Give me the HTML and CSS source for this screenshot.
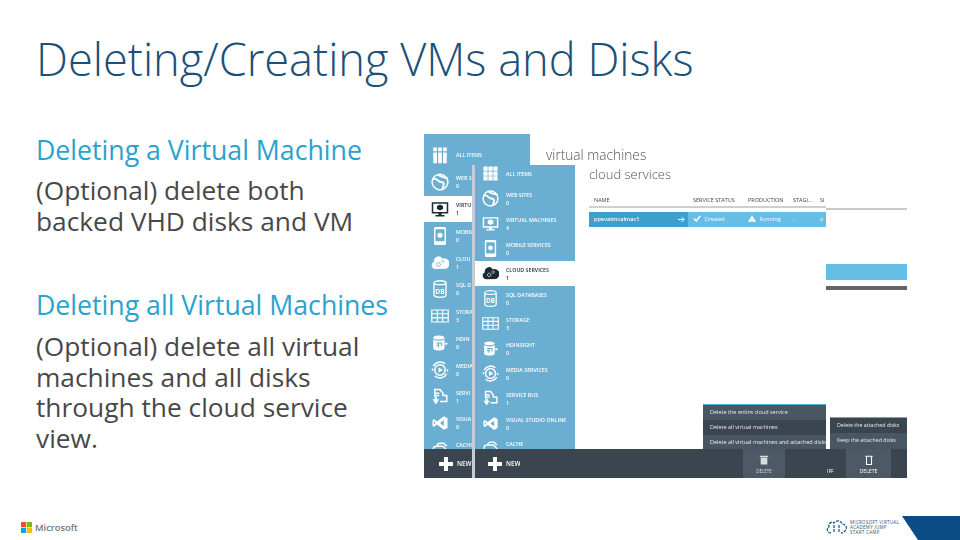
FILE: index.html

```html
<!DOCTYPE html>
<html lang="en">
<head>
    <meta charset="UTF-8" />
    <title>Deleting/Creating VMs and Disks</title>
    <link rel="stylesheet" href="styles.css">
</head>
<body>
<svg class="defs" width="0" height="0">
    <defs>
        <symbol id="i-all" viewBox="0 0 24 24"><path fill="currentColor" d="M3 2h5v5H3zM9.500 2h5v5h-5zM16 2h5v5h-5zM3 8.500h5V23H3zM9.500 8.500h5V23h-5zM16 8.500h5V23h-5z"/></symbol>
        <symbol id="i-grid" viewBox="0 0 24 24"><path fill="currentColor" d="M2 2h6v6H2zM9 2h6v6H9zM16 2h6v6h-6zM2 9h6v6H2zM9 9h6v6H9zM16 9h6v6h-6zM2 16h6v6H2zM9 16h6v6H9zM16 16h6v6h-6z"/></symbol>
        <symbol id="i-web" viewBox="0 0 24 24"><circle cx="12" cy="12" r="10.500" fill="none" stroke="currentColor" stroke-width="2"/><path fill="none" stroke="currentColor" stroke-width="2.600" d="M3 8c6-2 5 4 10 4s5 4 2 9M9 2c4 3 8 4 13 5"/></symbol>
        <symbol id="i-vm" viewBox="0 0 24 24"><path fill="currentColor" fill-rule="evenodd" d="M1 3h22v15h-9v2h4v2H6v-2h4v-2H1zM3 5v11h18V5z"/><path fill="currentColor" d="M12 6l4 2v4l-4 2-4-2V8z"/></symbol>
        <symbol id="i-mobile" viewBox="0 0 24 24"><path fill="currentColor" fill-rule="evenodd" d="M6 0h12a2 2 0 0 1 2 2v20a2 2 0 0 1-2 2H6a2 2 0 0 1-2-2V2a2 2 0 0 1 2-2zM6 3v16h12V3z"/><circle cx="12" cy="11" r="3.400" fill="currentColor"/></symbol>
        <symbol id="i-cloud" viewBox="0 0 24 24"><path fill="currentColor" d="M6 20a5 5 0 0 1-2-9.600A6 6 0 0 1 15 6a5 5 0 0 1 5 13.600z"/><circle cx="10" cy="14" r="2.400" fill="none" stroke="var(--hole)" stroke-width="1.400" stroke-dasharray="1.200 .6"/><circle cx="15.500" cy="10" r="1.800" fill="none" stroke="var(--hole)" stroke-width="1.200" stroke-dasharray="1 .5"/></symbol>
        <symbol id="i-sql" viewBox="0 0 24 24"><path fill="none" stroke="currentColor" stroke-width="1.800" d="M4 4c0-4 16-4 16 0v16c0 4-16 4-16 0zM4 4c0 3 16 3 16 0"/><text x="12" y="18" text-anchor="middle" font-size="9" font-weight="700" fill="currentColor">DB</text></symbol>
        <symbol id="i-storage" viewBox="0 0 24 24"><path fill="none" stroke="currentColor" stroke-width="1.500" d="M1 4h22v16H1zM1 9h22M1 14.500h22M8.500 4v16M15.500 4v16"/></symbol>
        <symbol id="i-hd" viewBox="0 0 24 24"><path fill="currentColor" d="M3 5c0-4 15-4 15 0v14c0 4-15 4-15 0z"/><path fill="none" stroke="var(--hole)" stroke-width="1.500" d="M3 6c2 3 13 3 15 0M7 12h8M10 12v6M14 12v4M7 15h4"/><path fill="currentColor" d="M19 11l4 2-4 2z"/></symbol>
        <symbol id="i-media" viewBox="0 0 24 24"><circle cx="12" cy="12" r="7" fill="none" stroke="currentColor" stroke-width="2"/><path fill="none" stroke="currentColor" stroke-width="2" d="M3 7a10.500 10.500 0 0 1 16-3M21 17a10.500 10.500 0 0 1-16 3M2 13v-3M22 11v3"/><path fill="currentColor" d="M10 8.500l6 3.500-6 3.500z"/></symbol>
        <symbol id="i-bus" viewBox="0 0 24 24"><path fill="none" stroke="currentColor" stroke-width="2" d="M5 12V2h7l4 5v3h5v8H12M5 7h6M5 10h6"/><path fill="currentColor" d="M2 15h3v-3h3v3h3l-4.500 7z"/></symbol>
        <symbol id="i-vso" viewBox="0 0 24 24"><path fill="currentColor" d="M17 3l5 2.500v13L17 21 8 14l-4 3-2-1V8l2-1 4 3zM17 8l-5 4 5 4zM4 10v4l2-2z"/></symbol>
        <symbol id="i-cache" viewBox="0 0 24 24"><path fill="none" stroke="currentColor" stroke-width="2" d="M3 22V10c0-2 3-3 5-3h8l5 5v10zM8 7c0-3 3-4 5-4h4l4 4"/><path fill="currentColor" d="M3 14h18v3H3z"/></symbol>
    </defs>
</svg>

<div class="slide">
    <h1 class="title">Deleting/Creating VMs and Disks</h1>

    <div class="content">
        <div class="notes">
            <h2>Deleting a Virtual Machine</h2>
            <p>(Optional) delete both backed VHD disks and VM</p>
            <h2 class="second">Deleting all Virtual Machines</h2>
            <p>(Optional) delete all virtual machines and all disks through the cloud service view.</p>
        </div>

        <div class="shot">
            <div class="portal">
                <nav class="nav nav-back">
                    <div class="nav-item"><svg><use href="#i-all"/></svg><div><b>ALL ITEMS</b></div></div>
                    <div class="nav-item"><svg><use href="#i-web"/></svg><div><b>WEB S</b><i>0</i></div></div>
                    <div class="nav-item active"><svg><use href="#i-vm"/></svg><div><b>VIRTU</b><i>1</i></div></div>
                    <div class="nav-item"><svg><use href="#i-mobile"/></svg><div><b>MOBIL</b><i>0</i></div></div>
                    <div class="nav-item"><svg><use href="#i-cloud"/></svg><div><b>CLOU</b><i>1</i></div></div>
                    <div class="nav-item"><svg><use href="#i-sql"/></svg><div><b>SQL D</b><i>0</i></div></div>
                    <div class="nav-item"><svg><use href="#i-storage"/></svg><div><b>STORA</b><i>3</i></div></div>
                    <div class="nav-item"><svg><use href="#i-hd"/></svg><div><b>HDIN</b><i>0</i></div></div>
                    <div class="nav-item"><svg><use href="#i-media"/></svg><div><b>MEDIA</b><i>0</i></div></div>
                    <div class="nav-item"><svg><use href="#i-bus"/></svg><div><b>SERVI</b><i>1</i></div></div>
                    <div class="nav-item"><svg><use href="#i-vso"/></svg><div><b>VISUA</b><i>0</i></div></div>
                    <div class="nav-item last"><svg><use href="#i-cache"/></svg><div><b>CACHI</b></div></div>
                </nav>
                <div class="page-title">virtual machines</div>

                <div class="window">
                    <nav class="nav nav-front">
                        <div class="nav-item"><svg><use href="#i-grid"/></svg><div><b>ALL ITEMS</b></div></div>
                        <div class="nav-item"><svg><use href="#i-web"/></svg><div><b>WEB SITES</b><i>0</i></div></div>
                        <div class="nav-item"><svg><use href="#i-vm"/></svg><div><b>VIRTUAL MACHINES</b><i>4</i></div></div>
                        <div class="nav-item"><svg><use href="#i-mobile"/></svg><div><b>MOBILE SERVICES</b><i>0</i></div></div>
                        <div class="nav-item active"><svg><use href="#i-cloud"/></svg><div><b>CLOUD SERVICES</b><i>1</i></div></div>
                        <div class="nav-item"><svg><use href="#i-sql"/></svg><div><b>SQL DATABASES</b><i>0</i></div></div>
                        <div class="nav-item"><svg><use href="#i-storage"/></svg><div><b>STORAGE</b><i>3</i></div></div>
                        <div class="nav-item"><svg><use href="#i-hd"/></svg><div><b>HDINSIGHT</b><i>0</i></div></div>
                        <div class="nav-item"><svg><use href="#i-media"/></svg><div><b>MEDIA SERVICES</b><i>0</i></div></div>
                        <div class="nav-item"><svg><use href="#i-bus"/></svg><div><b>SERVICE BUS</b><i>1</i></div></div>
                        <div class="nav-item"><svg><use href="#i-vso"/></svg><div><b>VISUAL STUDIO ONLINE</b><i>0</i></div></div>
                        <div class="nav-item last"><svg><use href="#i-cache"/></svg><div><b>CACHE</b></div></div>
                    </nav>
                    <div class="main">
                        <div class="main-title">cloud services</div>
                        <div class="table-head">
                            <span class="col-name">NAME</span>
                            <span class="col-status">SERVICE STATUS</span>
                            <span class="col-prod">PRODUCTION</span>
                            <span class="col-stag">STAGI...</span>
                            <span class="col-sub">SI</span>
                        </div>
                        <div class="table-row">
                            <span class="cell-name">ppevatmcalmac1
                                <svg class="arrow" viewBox="0 0 8 8"><path fill="none" stroke="#fff" stroke-width="1.100" d="M0 4h7M4 1l3 3-3 3"/></svg>
                            </span>
                            <span class="cell-rest">
                                <span class="col-status">
                                    <svg class="state" viewBox="0 0 10 8"><path fill="none" stroke="#fff" stroke-width="2" d="M1 4l3 3 5-6"/></svg>
                                    Created
                                </span>
                                <span class="col-prod">
                                    <svg class="state" viewBox="0 0 10 8"><path fill="#fff" fill-rule="evenodd" d="M5 0l5 8H0zM4.600 3v2.500h.8V3zM4.600 6v1h.8V6z"/></svg>
                                    Running
                                </span>
                                <span class="col-stag">-</span>
                                <span class="col-sub">o</span>
                            </span>
                        </div>
                    </div>
                </div>

                <div class="right-rule"></div>
                <div class="right-bar"></div>
                <div class="right-line"></div>

                <div class="menu menu-one">
                    <div>Delete the entire cloud service</div>
                    <div class="dark">Delete all virtual machines</div>
                    <div>Delete all virtual machines and attached disks</div>
                </div>
                <div class="menu menu-two">
                    <div class="dark">Delete the attached disks</div>
                    <div>Keep the attached disks</div>
                </div>

                <div class="cmdbar">
                    <div class="new new-back"><span class="plus"></span>NEW</div>
                    <div class="new new-front"><span class="plus"></span>NEW</div>
                    <div class="cmd cmd-one">
                        <svg viewBox="0 0 12 12"><path fill="currentColor" d="M1 1h10v1.500H1zM2 3h8v8.500H2z"/></svg>
                        <span>DELETE</span>
                    </div>
                    <div class="off">IFF</div>
                    <div class="cmd cmd-two">
                        <svg viewBox="0 0 12 12"><path fill="none" stroke="currentColor" stroke-width="1.300" d="M1.500 1.500h9M3 1.500v10h6v-10"/></svg>
                        <span>DELETE</span>
                    </div>
                </div>
            </div>
        </div>
    </div>

    <footer class="footer">
        <div class="ms">
            <svg width="11" height="11" viewBox="0 0 11 11">
                <rect width="5.200" height="5.200" fill="#f25022"/>
                <rect x="5.800" width="5.200" height="5.200" fill="#7fba00"/>
                <rect y="5.800" width="5.200" height="5.200" fill="#00a4ef"/>
                <rect x="5.800" y="5.800" width="5.200" height="5.200" fill="#ffb900"/>
            </svg>
            <span>Microsoft</span>
        </div>
        <div class="mva">
            <svg width="22" height="16" viewBox="0 0 22 16">
                <path fill="none" stroke="#1f5f8f" stroke-width="1.300" stroke-dasharray="3 1" d="M5 14C1 14 0 9 3 8 2 4 6 2 8 4c2-3 7-3 8 1 4 0 6 4 3 7-1 1-2 2-4 2M8 6v8M13 6v8"/>
            </svg>
            <div class="mva-text">MICROSOFT VIRTUAL<br>ACADEMY JUMP<br>START CAMP</div>
        </div>
        <div class="corner"></div>
    </footer>
</div>
</body>
</html>
```

FILE: styles.css

```css
html, body {
    margin: 0;
    padding: 0;
    background: #ffffff;
}
.defs {
    display: none;
}
.slide {
    width: 960px;
    height: 540px;
    position: relative;
    overflow: hidden;
    font-family: 'Open Sans', 'Noto Sans', sans-serif;
}
.title {
    margin: 0;
    padding: 30px 0 0 36px;
    font-size: 45.200px;
    line-height: 58px;
    font-weight: 300;
    color: #1b5079;
    white-space: nowrap;
}
.content {
    display: flex;
    padding-top: 46px;
}
.notes {
    flex: none;
    padding-left: 36px;
    box-sizing: border-box;
    width: 424px;
}
.notes h2 {
    margin: 0 0 10px;
    font-size: 26.700px;
    line-height: 31px;
    font-weight: 400;
    color: #29a3cd;
    white-space: nowrap;
}
.notes h2.second {
    margin: 53px 0 11px;
}
.notes p {
    margin: 0;
    max-width: 335px;
    font-size: 26.300px;
    line-height: 30.500px;
    color: #484848;
}

/* the screenshot on the right */
.shot {
    width: 483px;
    height: 344px;
    flex: none;
    filter: blur(0.35px);
}
.portal {
    position: relative;
    width: 483px;
    height: 344px;
    overflow: hidden;
    background: #fff;
}
.nav {
    background: #6aaed1;
    color: #fff;
    box-sizing: border-box;
    overflow: hidden;
}
.nav-item {
    --hole: #6aaed1;
    display: flex;
    align-items: center;
    box-sizing: border-box;
    white-space: nowrap;
}
.nav-item svg {
    flex: none;
}
.nav-item b,
.nav-item i {
    display: block;
    font-size: 5.300px;
    line-height: 8px;
    font-weight: 600;
    font-style: normal;
}
.nav-item.active {
    --hole: #fff;
    background: #fff;
    color: #1e2a33;
}
.nav-item.last {
    align-items: flex-start;
    padding-top: 4px;
}
.nav-back {
    position: absolute;
    left: 0;
    top: 0;
    width: 106px;
    height: 344px;
    padding-top: 8px;
}
.nav-back .nav-item {
    height: 26.800px;
    padding-left: 7px;
    gap: 7px;
}
.nav-back .nav-item svg {
    width: 18px;
    height: 18px;
}
.page-title {
    position: absolute;
    left: 122px;
    top: 12px;
    font-size: 13.700px;
    line-height: 18px;
    font-weight: 300;
    color: #555;
}
.window {
    position: absolute;
    left: 48px;
    top: 31px;
    width: 435px;
    height: 313px;
    display: flex;
    background: #fff;
    border-left: 3px solid #c5cdd3;
    box-sizing: border-box;
}
.nav-front {
    width: 100px;
    flex: none;
    height: 284px;
}
.nav-front .nav-item {
    height: 25px;
    padding-left: 7px;
    gap: 7px;
}
.nav-front .nav-item:first-child {
    margin-top: -4px;
}
.nav-front .nav-item svg {
    width: 17px;
    height: 17px;
}
.main {
    flex: 1;
    padding-left: 14px;
}
.main-title {
    font-size: 13px;
    line-height: 18px;
    font-weight: 300;
    color: #555;
}
.table-head {
    display: flex;
    width: 237px;
    margin-top: 9px;
    height: 14px;
    font-size: 5.500px;
    line-height: 16px;
    color: #444;
    border-bottom: 2px solid #cfcfcf;
    white-space: nowrap;
}
.col-name {
    width: 104px;
    padding-left: 5px;
    box-sizing: border-box;
}
.col-status {
    width: 55px;
}
.col-prod {
    width: 45px;
}
.col-stag {
    width: 27px;
}
.col-sub {
    width: 6px;
}
.table-row {
    display: flex;
    width: 237px;
    height: 15px;
    margin-top: 4px;
    font-size: 5.500px;
    line-height: 15px;
    color: #fff;
    white-space: nowrap;
}
.cell-name {
    width: 99px;
    flex: none;
    box-sizing: border-box;
    padding: 0 3px 0 5px;
    display: flex;
    justify-content: space-between;
    align-items: center;
    background: #3d9fcc;
    font-weight: 600;
}
.arrow {
    width: 7px;
    height: 7px;
}
.cell-rest {
    flex: 1;
    display: flex;
    padding-left: 5px;
    background: #66bde6;
}
.state {
    width: 8px;
    height: 7px;
    margin-right: 2px;
    vertical-align: -1px;
}
.right-rule,
.right-bar,
.right-line {
    position: absolute;
    left: 402px;
    width: 81px;
}
.right-rule {
    top: 74px;
    height: 2px;
    background: #c9c9c9;
}
.right-bar {
    top: 130px;
    height: 16px;
    background: #66bde6;
}
.right-line {
    top: 152px;
    height: 4px;
    background: #666;
}

/* delete menus sit over the command bar */
.menu {
    position: absolute;
    box-sizing: border-box;
    border-top: 1px solid #4fb3d4;
    background: #4a5661;
    color: #e8ecef;
    font-size: 5.500px;
    white-space: nowrap;
    overflow: hidden;
}
.menu div {
    height: 15px;
    line-height: 15px;
    padding-left: 7px;
}
.menu .dark {
    background: #3a4550;
}
.menu-one {
    left: 279px;
    top: 270px;
    width: 123px;
    height: 46px;
}
.menu-two {
    left: 406px;
    top: 283px;
    width: 77px;
    height: 33px;
    font-size: 5.300px;
}
.cmdbar {
    position: absolute;
    left: 0;
    right: 0;
    bottom: 0;
    height: 29px;
    background: #3a4550;
    color: #fff;
}
.cmdbar::before {
    content: "";
    position: absolute;
    left: 48px;
    top: 0;
    bottom: 0;
    width: 3px;
    background: #c5cdd3;
}
.new {
    position: absolute;
    top: 0;
    height: 29px;
    display: flex;
    align-items: center;
    gap: 4px;
    font-size: 6.300px;
    font-weight: 600;
    overflow: hidden;
}
.new-back {
    left: 15px;
    width: 33px;
}
.new-front {
    left: 64px;
}
.plus {
    width: 14px;
    height: 14px;
    flex: none;
    background:
        linear-gradient(#fff, #fff) center / 14px 4px no-repeat,
        linear-gradient(#fff, #fff) center / 4px 14px no-repeat;
}
.cmd {
    position: absolute;
    top: 0;
    height: 29px;
    background: #4d5964;
    display: flex;
    flex-direction: column;
    align-items: center;
    font-size: 4.500px;
    line-height: 6px;
    padding-top: 6px;
    box-sizing: border-box;
    gap: 3px;
}
.cmd svg {
    width: 10px;
    height: 10px;
}
.cmd-one {
    left: 319px;
    width: 42px;
    color: #d7dce0;
}
.cmd-two {
    left: 422px;
    width: 45px;
    font-size: 5.200px;
}
.off {
    position: absolute;
    left: 403px;
    top: 19px;
    font-size: 5px;
    line-height: 6px;
}

/* footer logos */
.footer {
    position: absolute;
    left: 0;
    right: 0;
    bottom: 0;
    height: 24px;
}
.ms {
    position: absolute;
    left: 21px;
    top: 6px;
    display: flex;
    align-items: center;
    gap: 3px;
    font-size: 9.300px;
    font-weight: 600;
    color: #737373;
    line-height: 11px;
}
.mva {
    position: absolute;
    left: 826px;
    top: 3px;
    display: flex;
    gap: 2px;
    align-items: center;
}
.mva-text {
    font-size: 4.500px;
    line-height: 5px;
    color: #1f4f7a;
    white-space: nowrap;
    letter-spacing: 0.300px;
}
.corner {
    position: absolute;
    right: 0;
    top: 0;
    width: 58px;
    height: 24px;
    background: #0a4c86;
    clip-path: polygon(0 0, 100% 0, 100% 100%, 16px 100%);
}
```
